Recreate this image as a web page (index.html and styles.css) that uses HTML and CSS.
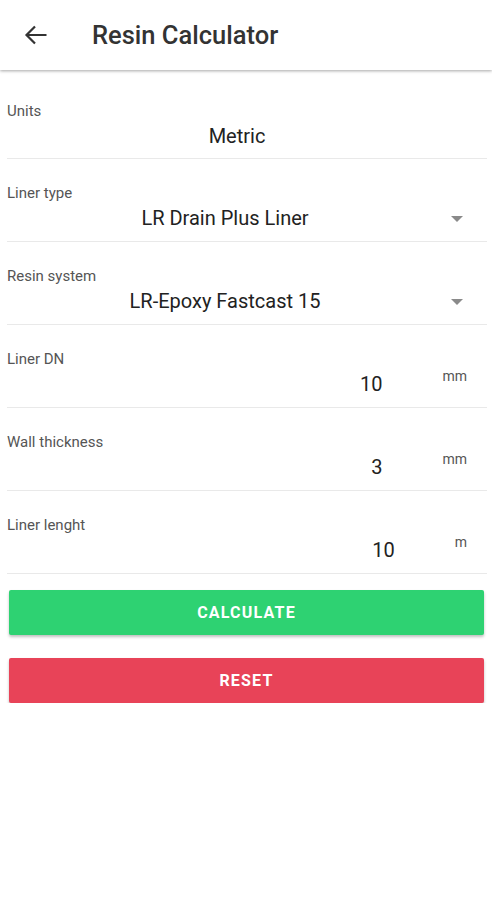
FILE: index.html
```html
<!DOCTYPE html>
<html lang="en">
<head>
  <meta charset="UTF-8">
  <meta name="viewport" content="width=device-width, initial-scale=1.0">
  <title>Resin Calculator</title>
  <link rel="stylesheet" href="styles.css">
</head>
<body>
  <!-- App bar -->
  <header class="app-bar">
    <button class="back-btn" aria-label="Back">
      <svg width="24" height="20" viewBox="0 0 24 20">
        <path d="M22.5 10H2.5M11 1.5L2.5 10L11 18.5" fill="none" stroke="#333" stroke-width="2.2"/>
      </svg>
    </button>
    <h1 class="title">Resin Calculator</h1>
  </header>

  <main class="form">
    <div class="field field-units">
      <div class="field-label">Units</div>
      <div class="field-value units-value">Metric</div>
    </div>

    <div class="field">
      <div class="field-label">Liner type</div>
      <div class="spinner">
        <span class="spinner-text">LR Drain Plus Liner</span>
        <span class="spinner-arrow"></span>
      </div>
    </div>

    <div class="field">
      <div class="field-label">Resin system</div>
      <div class="spinner">
        <span class="spinner-text">LR-Epoxy Fastcast 15</span>
        <span class="spinner-arrow"></span>
      </div>
    </div>

    <div class="field">
      <div class="field-label">Liner DN</div>
      <div class="number-row">
        <span class="number">10</span><span class="unit">mm</span>
      </div>
    </div>

    <div class="field">
      <div class="field-label">Wall thickness</div>
      <div class="number-row">
        <span class="number">3</span><span class="unit">mm</span>
      </div>
    </div>

    <div class="field">
      <div class="field-label">Liner lenght</div>
      <div class="number-row">
        <span class="number">10</span><span class="unit">m</span>
      </div>
    </div>

    <button class="action btn-calculate">CALCULATE</button>
    <button class="action btn-reset">RESET</button>
  </main>
</body>
</html>
```

FILE: styles.css
```css
body {
  margin: 0;
  font-family: Roboto, "Noto Sans", sans-serif;
  background: #fff;
  color: #222;
}
.app-bar {
  height: 70px;
  display: flex;
  align-items: center;
  background: #fff;
  box-shadow: 0 1px 3px rgba(0, 0, 0, 0.35);
  position: relative;
}
.back-btn {
  border: none;
  background: none;
  padding: 0;
  margin-left: 24px;
  width: 24px;
  height: 20px;
  display: flex;
}
.title {
  margin: 0 0 0 44px;
  font-size: 25.5px;
  font-weight: 500;
  color: #333;
  line-height: 30px;
}
.form {
  padding: 0 5px 0 7px;
}
.field {
  padding: 25px 0 11px;
  border-bottom: 1px solid #e9e9e9;
}
.field-units {
  padding-top: 32px;
  padding-bottom: 10px;
}
.field-label {
  font-size: 15px;
  line-height: 18px;
  color: #555;
}
.field-value, .spinner, .number-row {
  margin-top: 4px;
  font-size: 20px;
  line-height: 24px;
  color: #222;
}
.units-value {
  text-align: center;
  padding-right: 20px;
}
.spinner {
  display: flex;
  align-items: center;
}
.spinner-text {
  flex: 1;
  text-align: center;
}
.spinner-arrow {
  width: 27px;
  height: 24px;
  margin-right: 17px;
  display: flex;
  align-items: center;
  justify-content: center;
}
.spinner-arrow::after {
  content: "";
  border-left: 6px solid transparent;
  border-right: 6px solid transparent;
  border-top: 6px solid #8a8a8a;
  margin-top: 2px;
}
.number-row {
  text-align: right;
  padding-right: 20px;
}
.unit {
  margin-left: 60px;
  font-size: 14px;
  line-height: 0;
  vertical-align: 10px;
  color: #555;
}
.action {
  display: block;
  width: 475px;
  height: 45px;
  margin-left: 2px;
  border: none;
  border-radius: 2px;
  color: #fff;
  font-family: Roboto, sans-serif;
  font-size: 16px;
  font-weight: 700;
  letter-spacing: 1.2px;
  box-shadow: 0 2px 3px rgba(0, 0, 0, 0.25);
}
.btn-calculate {
  margin-top: 16px;
  background: #2ed272;
}
.btn-reset {
  margin-top: 23px;
  background: #e84358;
}
```
